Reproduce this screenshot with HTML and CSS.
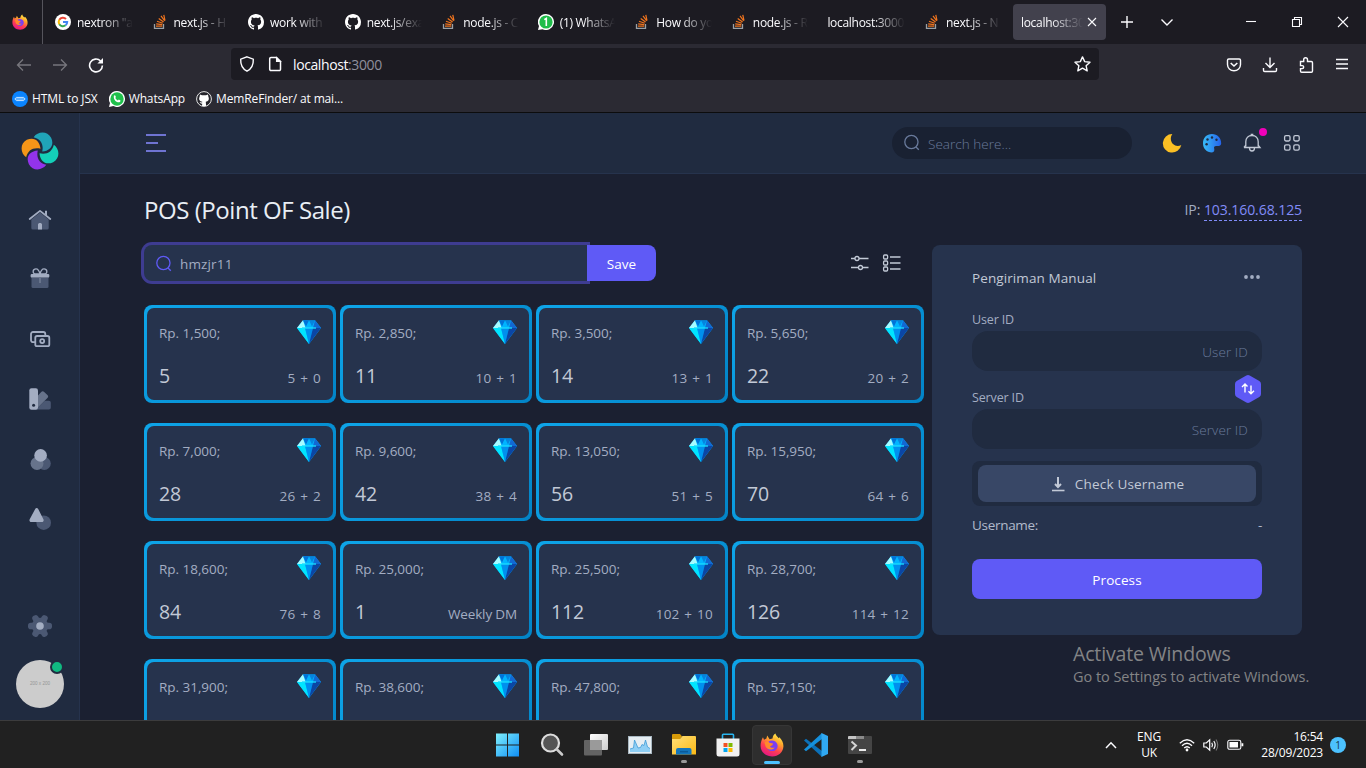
FILE: index.html
```html
<!DOCTYPE html>
<html lang="en">
<head>
<meta charset="utf-8">
<title>localhost:3000</title>
<link rel="stylesheet" href="styles.css">
</head>
<body>
<svg class="defs" width="0" height="0" aria-hidden="true">
  <defs>
    <linearGradient id="ffBody" x1="0.8" y1="0" x2="0.3" y2="1"><stop offset="0" stop-color="#fff44f"/><stop offset=".35" stop-color="#ffa32b"/><stop offset=".65" stop-color="#ff4050"/><stop offset="1" stop-color="#e31587"/></linearGradient>
    <linearGradient id="win" x1="0" y1="0" x2="1" y2="1"><stop offset="0" stop-color="#7ff0fd"/><stop offset="1" stop-color="#0f8ef5"/></linearGradient>
    <linearGradient id="folder" x1="0" y1="0" x2="1" y2="1"><stop offset="0" stop-color="#ffe07a"/><stop offset="1" stop-color="#fbb915"/></linearGradient>
    <linearGradient id="palette" x1="0" y1="0" x2="1" y2="0"><stop offset="0" stop-color="#38bdf8"/><stop offset="1" stop-color="#2563eb"/></linearGradient>
    <linearGradient id="glass" x1="0" y1="0" x2="1" y2="1"><stop offset="0" stop-color="#fff"/><stop offset="1" stop-color="#ccc"/></linearGradient>
  </defs>
  <symbol id="firefox" viewBox="0 0 24 24">
    <path fill="url(#ffBody)" d="M3 4.2 4 6.8 6.4 5.4 7.2 2.6 9.6 6.2 12.5 5.6C12.8 3 14 1.4 15.4.6c.4 2 2 3.200 3.300 4.700l.7-1c2.600 2.600 4.200 5.700 4 9.300C23 19.600 18.400 23.500 12.200 23.500S.7 19.300.6 13C.5 9.800 1.500 6.600 3 4.200Z"/>
    <path fill="#7b3ff2" d="M8.500 8.500c3-2.200 8-.9 9 3.200.8 3.600-2 6.600-5.600 6.400-3.200-.2-5.400-2.400-5.200-5.200l3.700.5 2.600-1.600-3.300-1.100Z"/>
    <path fill="#ff8a2c" d="M4.500 9.500c1.500-1.600 3.500-1.300 4.700.2l3.800.7c.2 1.500-2.700 1.600-3 3.300 1.200 1.500 3.100 1.200 4.700.7-1.800 3.100-7.500 2.700-9.100-1Z"/>
  </symbol>
  <symbol id="stack" viewBox="0 0 16 16">
    <path d="M2.500 10v4.300h9V10" fill="none" stroke="#9ba0a5" stroke-width="1.300"/>
    <path d="M4 12.200h6.300M4.200 9.800l6.100.8M5 7.200l5.800 2M6.700 4.400l4.900 3.700M9 1.900l3.700 4.900M11.800.8l1.200 5.900" fill="none" stroke="#f0741e" stroke-width="1.200"/>
  </symbol>
  <symbol id="github" viewBox="0 0 16 16"><path d="M8 0C3.580 0 0 3.580 0 8c0 3.540 2.290 6.530 5.470 7.590.4.070.55-.17.55-.38 0-.19-.01-.82-.01-1.490-2.010.37-2.530-.49-2.690-.94-.09-.23-.48-.94-.82-1.130-.28-.15-.68-.52-.01-.53.63-.01 1.080.58 1.230.82.72 1.210 1.870.87 2.330.66.07-.52.28-.87.51-1.070-1.780-.2-3.640-.89-3.640-3.950 0-.87.31-1.590.82-2.150-.08-.2-.36-1.020.08-2.120 0 0 .67-.21 2.200.82.64-.18 1.320-.27 2-.27s1.360.09 2 .27c1.530-1.040 2.200-.82 2.200-.82.44 1.100.16 1.920.08 2.120.51.56.82 1.270.82 2.150 0 3.070-1.870 3.750-3.650 3.950.29.25.54.73.54 1.480 0 1.070-.01 1.930-.01 2.200 0 .21.15.46.55.38A8.010 8.010 0 0 0 16 8c0-4.420-3.580-8-8-8Z"/></symbol>
  <symbol id="search" viewBox="0 0 20 20"><circle cx="9.400" cy="9" r="6.600"/><path d="m14 14 2.800 2.700"/></symbol>
  <symbol id="gem" viewBox="0 0 24 24">
    <path fill="#00b4ff" d="M6 .2h12L24 8 12 24 0 8Z"/>
    <path fill="#a6fbff" d="M6 .2 8.500 8H0Z"/><path fill="#0072d8" d="M6 .2 9 6.500 12 .2Z"/><path fill="#0864c8" d="M18 .2 15 6.500 12 .2Z" opacity=".6"/>
    <path fill="#1268d3" d="M18 .2 16 8h8Z"/>
    <path fill="#00e5ff" d="M0 8h8l4 16Z"/><path fill="#0090ee" d="M8 8h8l-4 16Z"/><path fill="#0b46a5" d="M16 8h8L12 24Z"/>
    <path fill="#16dcff" d="M5 7.200h14v1.600H5Z" opacity=".85"/>
  </symbol>
</svg>

<header class="browser">
  <div class="tabs">
    <div class="pinned"><svg width="16" height="16"><use href="#firefox"/></svg></div>
    <div class="tab"><svg width="16" height="16" viewBox="0 0 16 16"><circle cx="8" cy="8" r="8" fill="#fff"/><g fill="none" stroke-width="2"><path stroke="#ea4335" d="M4.300 5.800A4.300 4.300 0 0 1 11 5"/><path stroke="#fbbc05" d="M4.300 5.800a4.400 4.400 0 0 0 0 4.400"/><path stroke="#34a853" d="M4.300 10.200a4.300 4.300 0 0 0 6.300 1.100"/><path stroke="#4285f4" d="M8 8.100h4.200q0 2-1.600 3.200"/></g></svg><span>nextron "a</span></div>
    <div class="tab"><svg width="16" height="16"><use href="#stack"/></svg><span>next.js - H</span></div>
    <div class="tab"><svg class="white" width="16" height="16"><use href="#github"/></svg><span>work with</span></div>
    <div class="tab"><svg class="white" width="16" height="16"><use href="#github"/></svg><span>next.js/exa</span></div>
    <div class="tab"><svg width="16" height="16"><use href="#stack"/></svg><span>node.js - C</span></div>
    <div class="tab"><svg width="16" height="16" viewBox="0 0 16 16"><path d="M8 0a8 8 0 1 1-3.500 15.200L0 16l1-4A8 8 0 0 1 8 0Z" fill="#fff"/><circle cx="8" cy="8" r="6.600" fill="#1fbd4a"/><path d="M6.300 5.600 8.300 4.400V12" fill="none" stroke="#fff" stroke-width="1.600"/></svg><span>(1) WhatsA</span></div>
    <div class="tab"><svg width="16" height="16"><use href="#stack"/></svg><span>How do yo</span></div>
    <div class="tab"><svg width="16" height="16"><use href="#stack"/></svg><span>node.js - R</span></div>
    <div class="tab"><span>localhost:3000</span></div>
    <div class="tab"><svg width="16" height="16"><use href="#stack"/></svg><span>next.js - N</span></div>
    <div class="tab active"><span>localhost:30</span><svg class="line" width="10" height="10" viewBox="0 0 10 10"><path d="m1 1 8 8M9 1 1 9"/></svg></div>
    <div class="tab-tools">
      <svg class="line" width="14" height="14" viewBox="0 0 14 14"><path stroke-width="1.400" d="M7 1v12M1 7h12"/></svg>
      <svg class="line" width="14" height="14" viewBox="0 0 14 14"><path stroke-width="1.400" d="m1.500 4.500 5.500 5.500 5.500-5.500"/></svg>
    </div>
    <div class="win-tools">
      <svg class="line" width="12" height="12" viewBox="0 0 12 12"><path d="M1 5.500h10"/></svg>
      <svg class="line" width="12" height="12" viewBox="0 0 12 12"><path d="M1.500 3.500h7v7h-7zM3.500 3.500v-2h7v7h-2"/></svg>
      <svg class="line" width="12" height="12" viewBox="0 0 12 12"><path d="m1 1 10 10M11 1 1 11"/></svg>
    </div>
  </div>
  <div class="toolbar">
    <div class="nav-tools">
      <svg class="line dim" width="16" height="16" viewBox="0 0 16 16"><path stroke-width="1.300" d="M15 8H1.500M7 2.500 1.500 8 7 13.500"/></svg>
      <svg class="line dim" width="16" height="16" viewBox="0 0 16 16"><path stroke-width="1.300" d="M1 8h13.500M9 2.500 14.500 8 9 13.500"/></svg>
      <svg class="line" width="16" height="16" viewBox="0 0 16 16"><path stroke-width="1.600" d="M12.600 4A6.400 6.400 0 1 0 14.400 8.500"/><path fill="#fbfbfe" stroke="none" d="M15 1v5.600H9.400Z"/></svg>
    </div>
    <div class="url">
      <svg class="line" width="16" height="16" viewBox="0 0 16 16"><path stroke-width="1.400" d="M8 .8 14.300 3.200c.3 5.500-1.500 9.400-6.300 12C3.200 12.600 1.400 8.700 1.700 3.200Z"/></svg>
      <svg class="line" width="14" height="16" viewBox="0 0 14 16"><path stroke-width="1.500" d="M3 1.500h5.500l4 4v7.700a1.300 1.300 0 0 1-1.300 1.300H3a1.300 1.300 0 0 1-1.300-1.300V2.800A1.300 1.300 0 0 1 3 1.500Z"/><path fill="#fbfbfe" d="M8.500 1.500v4h4Z"/></svg>
      <p>localhost<i>:3000</i></p>
      <svg class="line" width="17" height="16" viewBox="0 0 17 16"><path stroke-width="1.400" stroke-linejoin="round" d="m8.500.9 2.200 4.700 5.300.6-3.900 3.500 1.100 5.100-4.700-2.600-4.700 2.600 1.100-5.100L1 6.200l5.300-.6Z"/></svg>
    </div>
    <div class="ext-tools">
      <svg class="line" width="16" height="16" viewBox="0 0 16 16"><path stroke-width="1.400" d="M2.800 2h10.400c.8 0 1.300.5 1.300 1.300V7.500c0 3.600-2.800 6.200-6.500 6.200S1.500 11.100 1.500 7.500V3.300C1.500 2.500 2 2 2.800 2Z"/><path stroke-width="1.600" d="M4.700 6 8 9l3.300-3"/></svg>
      <svg class="line" width="16" height="16" viewBox="0 0 16 16"><path stroke-width="1.400" d="M8 .5v10M3.500 6 8 10.500 12.500 6M1.500 11v2.300c0 .8.500 1.200 1.200 1.200h10.600c.7 0 1.200-.4 1.200-1.200V11"/></svg>
      <svg class="line" width="16" height="16" viewBox="0 0 16 16"><path stroke-width="1.400" d="M2.500 4.500h3.200V2.700a1.900 1.900 0 0 1 3.800 0v1.800h3.800c.7 0 1.200.5 1.200 1.200v8.300c0 .7-.5 1.200-1.200 1.200H3.700c-.7 0-1.200-.5-1.200-1.200V11.600h1.700a1.500 1.500 0 0 0 0-3H2.500Z"/></svg>
      <svg class="line" width="16" height="16" viewBox="0 0 16 16"><path stroke-width="1.300" d="M2 2.500h12M2 7h12M2 11.500h12"/></svg>
    </div>
  </div>
  <div class="bookmarks">
    <svg width="16" height="16" viewBox="0 0 16 16"><circle cx="8" cy="8" r="8" fill="#0a84ff"/><path d="M4.500 6.400h7L13.200 8l-1.700 1.600h-7L2.800 8Z" fill="#5fb0ff" stroke="#d5eaff" stroke-width=".9"/></svg><span>HTML to JSX</span>
    <svg width="16" height="16" viewBox="0 0 16 16"><path d="M8 0a8 8 0 1 1-3.700 15.100L0 16l1-4A8 8 0 0 1 8 0Z" fill="#fff"/><circle cx="8" cy="8" r="6.700" fill="#1fc04b"/><path d="M4.900 4.700c.5-.7 1.300-.7 1.500 0l.5 1.200-.6 1c.6 1.200 1.500 2 2.600 2.500l.9-.8 1.700.8c.2 1.500-1.500 2.200-2.600 1.900C6.500 10.800 4.300 8 4.900 4.700Z" fill="#fff"/></svg><span>WhatsApp</span>
    <svg width="16" height="16" viewBox="0 0 16 16"><circle cx="8" cy="8" r="7.400" fill="#25242b" stroke="#e6e6e6"/><path fill="#fff" d="M4 3.500 6 4.200h4l2-.7.400 2.300c1.200 2.800-.2 4.700-2.600 5l.3 4.200H6l.2-2.200C4.500 13 4 11.500 3.500 11l2.600.5.200-.8C3.700 10.400 2.400 8.500 3.600 5.800Z"/></svg><span class="long">MemReFinder/ at mai...</span>
  </div>
</header>

<div class="app">
  <aside class="sidebar">
    <svg class="logo" width="38" height="38" viewBox="0 0 111 111">
      <path fill="#20a4b8" d="M37 15C49-2 77-4 88 17 98 38 86 55 62 57 67 35 57 20 37 15Z"/>
      <path fill="#f59518" transform="rotate(-90 55.500 55.500)" d="M37 15C49-2 77-4 88 17 98 38 86 55 62 57 67 35 57 20 37 15Z"/>
      <path fill="#9333ea" transform="rotate(180 55.500 55.500)" d="M37 15C49-2 77-4 88 17 98 38 86 55 62 57 67 35 57 20 37 15Z"/>
      <path fill="#14cfb8" transform="rotate(90 55.500 55.500)" d="M37 15C49-2 77-4 88 17 98 38 86 55 62 57 67 35 57 20 37 15Z"/>
    </svg>
    <nav class="menu">
      <svg viewBox="0 0 24 24"><path class="lo" d="m12 4.500 8.700 7v8.600a1.500 1.500 0 0 1-1.500 1.500H4.800a1.500 1.500 0 0 1-1.500-1.500v-8.600Z"/><path class="hi" d="M10 21.500v-5c0-2 4-2 4 0v5ZM17 2.800h2v5l-2-1.500Z"/><path class="st" d="M1.700 11 12 2.900 22.300 11"/></svg>
      <svg viewBox="0 0 24 24"><path class="lo" d="M3.500 9.500h17V18.500a1.500 1.500 0 0 1-1.500 1.500H5A1.500 1.500 0 0 1 3.500 18.500Z"/><path class="hi" d="M3.500 6h17c1.200 0 1.200 3.600 0 3.600h-17c-1.200 0-1.200-3.600 0-3.600Z"/><path class="mid" d="M11 9.500h2V15h-2Z"/><path class="st thin" d="M12 6C11 2 9.800.9 8 .9 4.500.9 4.500 5 6.500 6H17.500c2-1 2-5.100-1.500-5.100C14.200.9 13 2 12 6Z"/></svg>
      <svg viewBox="0 0 24 24"><path class="st" d="M6.700 14.200H5A2 2 0 0 1 3 12.200V6a2 2 0 0 1 2-2h10.300a2 2 0 0 1 2 2v1.500"/><rect class="st" x="7.300" y="8" width="14" height="10.200" rx="1.800"/><circle class="st" cx="14.200" cy="13.100" r="2"/></svg>
      <svg viewBox="0 0 24 24"><path class="lo" d="m10 19.500 6.800-6.800h4c1.300 0 2 .7 2 2v4.700c0 1.300-.7 2-2 2H8Z"/><path class="mid" d="m10 7.500 3.200-3.400c1-1 2-1 3 0L19.400 7c1 1 1 2 0 3L9.500 20Z"/><rect class="hi" x="1.300" y=".3" width="8.700" height="21.400" rx="2.200"/><circle cx="5.600" cy="17.300" r="1.500" fill="#202b40"/></svg>
      <svg viewBox="0 0 24 24"><circle class="lo" cx="16.300" cy="15.500" r="6.500"/><circle class="mid" cx="9" cy="15.500" r="6.500"/><circle class="hi" cx="12.600" cy="7.400" r="6.300"/></svg>
      <svg viewBox="0 0 24 24"><circle class="lo" cx="15.700" cy="14.700" r="7.300"/><path class="hi" d="M7.200.9c.6-1.200 2.300-1.200 3 0l5.200 10.300c.7 1.400-.1 2.800-1.500 2.800H3.200c-1.400 0-2.200-1.400-1.500-2.800Z"/></svg>
    </nav>
    <div class="side-foot">
      <svg width="24" height="24" viewBox="0 0 24 24"><g class="lo"><circle cx="12" cy="12" r="8.200"/><rect x="0" y="8.800" width="24" height="6.400" rx="2.800"/><rect x="0" y="8.800" width="24" height="6.400" rx="2.800" transform="rotate(60 12 12)"/><rect x="0" y="8.800" width="24" height="6.400" rx="2.800" transform="rotate(120 12 12)"/></g><circle class="hi" cx="12" cy="12" r="3.800"/></svg>
      <div class="avatar">200 x 200<b></b></div>
    </div>
  </aside>

  <div class="main">
    <div class="topbar">
      <div class="burger"><b></b><b class="short"></b><b></b></div>
      <div class="find"><svg width="20" height="20"><use href="#search"/></svg><span>Search here...</span></div>
      <div class="actions">
        <svg width="20" height="20" viewBox="0 0 20 20"><path fill="#fbbf24" d="M10.300 1C8 4.500 8.500 8.500 11 11c2.300 2.200 5.200 2.600 8.300 1.100A9.300 9.300 0 1 1 10.300 1Z"/></svg>
        <svg width="20" height="20" viewBox="0 0 20 20"><path fill="url(#palette)" d="M10 1c5.400 0 9.300 4 9.200 9.500-.2 2.500-2.400 2.700-4.700 2.500-2.200-.1-2.800.8-2.300 2.500.5 2-.2 3.900-2.200 3.900C4.600 19.400 1 15.500 1 10.200S4.600 1 10 1Z"/><g fill="#202b40"><circle cx="10" cy="4.500" r="1.200"/><circle cx="5.500" cy="6.500" r="1.200"/><circle cx="14.500" cy="6.800" r="1.200"/><circle cx="4.600" cy="11.200" r="1.200"/></g></svg>
        <div class="bell"><svg class="ic" width="20" height="20" viewBox="0 0 20 20"><path d="M3.800 13.500V8.800c0-3.600 2.500-6.300 6.200-6.300s6.200 2.700 6.200 6.300v4.700M2 14.500h16l-2-2.500M4 12l-2 2.500M7.500 15c0 2 .8 3 2.500 3s2.500-1 2.500-3M9.300 2.300V1.400h1.400v.9"/></svg><b></b></div>
        <svg class="ic" width="20" height="20" viewBox="0 0 20 20"><g><rect x="2.600" y="2.600" width="5.400" height="5.400" rx="1.400"/><rect x="11.800" y="2.600" width="5.400" height="5.400" rx="1.400"/><rect x="2.600" y="11.800" width="5.400" height="5.400" rx="1.400"/><rect x="11.800" y="11.800" width="5.400" height="5.400" rx="1.400"/></g></svg>
      </div>
    </div>

    <div class="content">
      <div class="title-row"><h1>POS (Point OF Sale)</h1><p>IP: <a>103.160.68.125</a></p></div>
      <div class="columns">
        <section class="shop">
          <div class="filter">
            <div class="field"><svg width="20" height="20"><use href="#search"/></svg><span>hmzjr11</span></div>
            <button class="save">Save</button>
            <div class="views">
              <svg class="ic" width="20" height="20" viewBox="0 0 20 20"><path d="M1 5.500h4M9 5.500h9.500M1 14.500h7.500M12.500 14.500h6"/><circle cx="7" cy="5.500" r="2"/><circle cx="10.500" cy="14.500" r="2"/></svg>
              <svg class="ic" width="20" height="20" viewBox="0 0 20 20"><path d="M8 4h10.500M8 10h10.500M8 16h10.500"/><rect x="1.600" y="2" width="4" height="4" rx="1"/><rect x="1.600" y="8" width="4" height="4" rx="1"/><rect x="1.600" y="14" width="4" height="4" rx="1"/></svg>
            </div>
          </div>
          <div class="cards">
            <article class="card"><div><p>Rp. 1,500;</p><svg width="24" height="24"><use href="#gem"/></svg><strong>5</strong><em>5 + 0</em></div></article>
            <article class="card"><div><p>Rp. 2,850;</p><svg width="24" height="24"><use href="#gem"/></svg><strong>11</strong><em>10 + 1</em></div></article>
            <article class="card"><div><p>Rp. 3,500;</p><svg width="24" height="24"><use href="#gem"/></svg><strong>14</strong><em>13 + 1</em></div></article>
            <article class="card"><div><p>Rp. 5,650;</p><svg width="24" height="24"><use href="#gem"/></svg><strong>22</strong><em>20 + 2</em></div></article>
            <article class="card"><div><p>Rp. 7,000;</p><svg width="24" height="24"><use href="#gem"/></svg><strong>28</strong><em>26 + 2</em></div></article>
            <article class="card"><div><p>Rp. 9,600;</p><svg width="24" height="24"><use href="#gem"/></svg><strong>42</strong><em>38 + 4</em></div></article>
            <article class="card"><div><p>Rp. 13,050;</p><svg width="24" height="24"><use href="#gem"/></svg><strong>56</strong><em>51 + 5</em></div></article>
            <article class="card"><div><p>Rp. 15,950;</p><svg width="24" height="24"><use href="#gem"/></svg><strong>70</strong><em>64 + 6</em></div></article>
            <article class="card"><div><p>Rp. 18,600;</p><svg width="24" height="24"><use href="#gem"/></svg><strong>84</strong><em>76 + 8</em></div></article>
            <article class="card"><div><p>Rp. 25,000;</p><svg width="24" height="24"><use href="#gem"/></svg><strong>1</strong><em class="word">Weekly DM</em></div></article>
            <article class="card"><div><p>Rp. 25,500;</p><svg width="24" height="24"><use href="#gem"/></svg><strong>112</strong><em>102 + 10</em></div></article>
            <article class="card"><div><p>Rp. 28,700;</p><svg width="24" height="24"><use href="#gem"/></svg><strong>126</strong><em>114 + 12</em></div></article>
            <article class="card"><div><p>Rp. 31,900;</p><svg width="24" height="24"><use href="#gem"/></svg></div></article>
            <article class="card"><div><p>Rp. 38,600;</p><svg width="24" height="24"><use href="#gem"/></svg></div></article>
            <article class="card"><div><p>Rp. 47,800;</p><svg width="24" height="24"><use href="#gem"/></svg></div></article>
            <article class="card"><div><p>Rp. 57,150;</p><svg width="24" height="24"><use href="#gem"/></svg></div></article>
          </div>
        </section>

        <section class="panel">
          <div class="panel-head"><h2>Pengiriman Manual</h2><svg width="16" height="4" viewBox="0 0 16 4" fill="#a3adc2"><circle cx="2" cy="2" r="1.900"/><circle cx="8" cy="2" r="1.900"/><circle cx="14" cy="2" r="1.900"/></svg></div>
          <label class="user">User ID</label>
          <div class="box">User ID</div>
          <div class="between"><label class="server">Server ID</label>
            <svg width="28" height="28" viewBox="0 0 28 28"><path fill="#5f5af6" d="M12.300.5q1.700-.9 3.400 0l9.600 5.500Q27 7 27 9v10q0 2-1.700 3l-9.600 5.500q-1.700.9-3.400 0L2.700 22Q1 21 1 19V9q0-2 1.700-3Z"/><path fill="none" stroke="#fff" stroke-width="1.400" d="M11 17.500V9.500M8 12l3-3 2.500 2.500M17 10.500v8M14.500 16.200l2.500 2.500 3-3"/></svg></div>
          <div class="box">Server ID</div>
          <div class="check"><button><svg width="16" height="16" viewBox="0 0 16 16"><path fill="none" stroke="#c2c9d6" stroke-width="2" d="M8 1v9.500M5 8l3 3 3-3"/><path stroke="#c2c9d6" stroke-width="1.600" d="M2 14.500h12.500"/></svg>Check Username</button></div>
          <div class="result"><span>Username:</span><span>-</span></div>
          <button class="process">Process</button>
        </section>
      </div>
    </div>
  </div>
</div>

<div class="watermark"><p>Activate Windows</p><small>Go to Settings to activate Windows.</small></div>

<footer class="taskbar">
  <div class="apps">
    <div><svg width="24" height="24" viewBox="0 0 24 24"><path fill="url(#win)" d="M0 .5h11v11H0zM12 .5h11v11H12zM0 12.500h11v11H0zM12 12.500h11v11H12z"/></svg></div>
    <div><svg width="24" height="24" viewBox="0 0 24 24"><circle cx="10.500" cy="10" r="8.500" fill="#555" stroke="#ddd" stroke-width="2.200"/><path d="m17 16.500 5 5" stroke="#ccc" stroke-width="2.600" stroke-linecap="round"/></svg></div>
    <div><svg width="24" height="24" viewBox="0 0 24 24"><rect x="6" y="1" width="18" height="16" rx="1" fill="url(#glass)"/><rect x="0" y="7" width="18" height="15.500" rx="1" fill="#6a6a6a" opacity=".9"/><path d="M6 7h12v10H6z" fill="#9a9a9a"/></svg></div>
    <div><svg width="24" height="20" viewBox="0 0 24 20"><rect x=".5" y="1.500" width="23" height="17" fill="#e6eef3" stroke="#a9b8c2"/><path fill="#8fcff5" d="M2 17v-3l3.500-1L6.500 5l3.500 8 2.500-.5 1.500-3 2 1L17.500 5l2 7 2.500 1.500V17Z"/><path fill="none" stroke="#3f9bd6" stroke-width=".8" d="M2 14l3.500-1L6.500 5l3.500 8 2.500-.5 1.500-3 2 1L17.500 5l2 7 2.500 1.500"/></svg></div>
    <div class="run"><svg width="24" height="24" viewBox="0 0 24 24"><path fill="#d79a08" d="M0 2a1 1 0 0 1 1-1h7l2 2.500-2 3H0Z"/><path fill="url(#folder)" d="M0 6h8l2.500-3H23a1 1 0 0 1 1 1v17.500H0Z"/><path fill="#1376bd" d="M4 21.500V17q0-2 2-2h11.500q2 0 2 2v4.500Z"/><path stroke="#0a5a99" stroke-width="1.500" d="M8 18.700h8"/></svg></div>
    <div><svg width="24" height="24" viewBox="0 0 24 24"><path fill="none" stroke="#29b5f0" stroke-width="1.600" d="M6.500 7V2q0-.8.800-.8h9.400q.8 0 .8.800v5"/><path fill="#f1f1f1" d="M.5 5.500h23V21q0 2.500-2.500 2.500H3Q.5 23.500.5 21Z"/><path fill="#f25022" d="M7.500 10h4v4h-4z"/><path fill="#7fba00" d="M12.500 10h4v4h-4z"/><path fill="#00a4ef" d="M7.500 15h4v4h-4z"/><path fill="#ffb900" d="M12.500 15h4v4h-4z"/></svg></div>
    <div class="run current"><svg width="24" height="24"><use href="#firefox"/></svg></div>
    <div><svg width="24" height="24" viewBox="0 0 24 24"><path fill="#0b70b8" d="m0 7.500 2-1.700L18 18v6Z"/><path fill="#1590dc" d="m0 16.500 2 1.700L18 6V0Z"/><path fill="#30a9f2" d="m17.500 0 6.500 3v18l-6.500 3Z"/></svg></div>
    <div class="run"><svg width="24" height="24" viewBox="0 0 24 24"><rect x="0" y="3" width="24" height="18" rx="1" fill="#454545"/><path fill="#c5c5c5" d="M0 6V4q0-1 1-1h15v3Z"/><path fill="#8a8a8a" d="M8 3h8v3H8z"/><path d="m3.500 8.500 4.500 4-4.500 4.500" fill="none" stroke="#d5d5d5" stroke-width="2"/><path d="M11 17h7" stroke="#fff" stroke-width="1.800"/></svg></div>
  </div>
  <div class="tray">
    <svg class="line" width="12" height="8" viewBox="0 0 12 8"><path stroke-width="1.500" d="m1 7 5-5.200L11 7"/></svg>
    <p class="lang">ENG<br>UK</p>
    <svg class="line" width="16" height="14" viewBox="0 0 16 14"><path stroke-width="1.300" d="M.8 5.200q7.200-7 14.400 0M3 7.700q5-4.800 10 0M5.200 10.100q2.800-2.600 5.600 0"/><circle cx="8" cy="12" r="1.400" fill="#fff" stroke="none"/></svg>
    <svg class="line" width="16" height="14" viewBox="0 0 16 14"><path stroke-width="1.200" d="M.8 5h2.500l3.400-3.200v10.400L3.300 9H.8ZM8.800 4.800q1.400 2.200 0 4.400M10.800 3q2.700 4 0 8"/><path stroke="#777" d="M13 1.500q3.500 5.500 0 11"/></svg>
    <svg class="line" width="17" height="12" viewBox="0 0 17 12"><rect x=".8" y="1.300" width="13" height="9" rx="1.800"/><path fill="#fff" stroke="none" d="M2.500 3h8.500v5.600H2.500zM14.500 4.300h1.800v3h-1.800z"/></svg>
    <p class="clock">16:54<br>28/09/2023</p>
    <b class="count">1</b>
  </div>
</footer>
</body>
</html>
```
FILE: styles.css
```css
* { box-sizing: border-box; margin: 0; padding: 0; }
body {
  width: 1366px; height: 768px; overflow: hidden; position: relative;
  display: flex; flex-direction: column;
  font-family: "Open Sans", "Noto Sans", sans-serif; font-size: 13.5px;
  background: #1b2031; color: #a3adc2;
}
svg { display: block; flex: none; }
.defs { position: absolute; }
button { border: 0; font: inherit; color: inherit; background: none; }
p, span, label, em, strong { white-space: nowrap; }

.line { fill: none; stroke: #fbfbfe; stroke-width: 1.1; }
.line.dim { stroke: #77767d; }
.white { fill: #fff; }

/* Browser chrome */
.browser { flex: none; height: 113px; background: #2b2a33; border-bottom: 1px solid #0c0c0d; color: #fbfbfe; }
.tabs { height: 44px; background: #1c1b22; display: flex; align-items: center; font-size: 12px; }
.pinned { width: 43px; height: 44px; padding: 14px 0 0 12px; border-right: 1px solid #55545c; margin-right: 4px; }
.tab { width: 96.55px; padding: 0 9px 0 8px; height: 44px; display: flex; align-items: center; gap: 6px; flex: none; }
.tab span { flex: 1; line-height: 20px; padding-top: 1px; letter-spacing: -.3px; -webkit-mask-image: linear-gradient(90deg, #000 calc(100% - 34px), transparent calc(100% - 2px)); mask-image: linear-gradient(90deg, #000 calc(100% - 34px), transparent calc(100% - 2px)); }
.tab.active { width: 93px; height: 36px; background: #42414d; border-radius: 4px; gap: 2px; padding-right: 11px; margin-left: .5px; }
.tab-tools { display: flex; gap: 26px; margin-left: 14px; }
.win-tools { display: flex; gap: 34px; margin-left: auto; padding-right: 17px; }
.toolbar { height: 42px; display: flex; align-items: center; }
.nav-tools { display: flex; gap: 20px; padding-left: 16px; width: 231px; }
.url { width: 868px; height: 32px; margin-top: -2px; background: #1c1b22; border-radius: 4px; display: flex; align-items: center; padding: 0 8px; }
.url svg + svg { margin-left: 13px; }
.url p { margin-left: 11px; font-size: 14px; letter-spacing: -.4px; flex: 1; padding-top: 1px; }
.url i { font-style: normal; color: #8f8f9d; }
.ext-tools { display: flex; gap: 20px; margin-left: auto; padding-right: 16px; }
.bookmarks { height: 25px; display: flex; align-items: center; padding-left: 12px; font-size: 12px; }
.bookmarks span { margin: 0 11px 0 4px; letter-spacing: -.12px; }
.bookmarks .long { letter-spacing: -.15px; }

/* Application shell */
.app { height: 607px; display: flex; overflow: hidden; }
.sidebar { width: 80px; background: #202b40; border-right: 1px solid #26334d; display: flex; flex-direction: column; align-items: center; padding: 19px 0 12px 1px; }
.logo { margin-right: 1px; }
.menu { display: flex; flex-direction: column; gap: 36px; margin-top: 38px; }
.menu svg { width: 24px; height: 24px; }
.lo { fill: #4b5873; }
.mid { fill: #67738b; }
.hi { fill: #a3adc2; }
.st { fill: none; stroke: #a3adc2; stroke-width: 1.8; stroke-linejoin: round; stroke-linecap: round; }
.thin { stroke-width: 1.4; }
.side-foot { margin-top: auto; display: flex; flex-direction: column; align-items: center; gap: 22px; }
.avatar { position: relative; width: 48px; height: 48px; border-radius: 50%; background: #ccc; color: #969696; font: 4.6px/48px "Liberation Sans", sans-serif; text-align: center; }
.avatar b { position: absolute; right: 0; top: 0; width: 14px; height: 14px; border-radius: 50%; border: 2px solid #202b40; background: #10b981; }

.main { flex: 1; display: flex; flex-direction: column; }
.topbar { flex: none; height: 61px; background: #202b40; border-bottom: 1px solid #26334d; display: flex; align-items: center; padding: 0 64px 0 66px; }
.burger { width: 20px; display: grid; gap: 6px; }
.burger b { height: 2px; background: #6f74d2; }
.burger .short { width: 12px; }
.find { margin-left: auto; width: 240px; height: 32px; border-radius: 16px; background: #192132; display: flex; align-items: center; gap: 6px; padding-left: 10px; color: #697a9b; font-weight: 300; letter-spacing: .03px; }
.find svg, .field svg { fill: none; stroke: #697a9b; stroke-width: 1.3; }
.find span { padding-top: 2px; }
.actions { display: flex; gap: 20px; margin-left: 30px; }
.ic { fill: none; stroke: #c2c9d6; stroke-width: 1.3; }
.bell { position: relative; }
.bell b { position: absolute; left: 17px; top: -5px; width: 8px; height: 8px; border-radius: 50%; background: #f000b9; }

.content { padding: 0 64px; }
.title-row { height: 71px; display: flex; justify-content: space-between; align-items: center; }
h1 { font-size: 24px; font-weight: 400; color: #e9eef5; letter-spacing: -.45px; }
.title-row p { font-size: 14px; letter-spacing: -.07px; }
.title-row a { color: #818cf8; border-bottom: 1px dashed #818cf8; padding-bottom: 1px; }
.columns { display: flex; gap: 8px; align-items: flex-start; }
.shop { width: 780px; }
.filter { display: flex; height: 36px; margin-bottom: 24px; }
.field { width: 443px; height: 36px; background: #26334d; border-radius: 8px 0 0 8px; box-shadow: 0 0 0 3px #3e3c91; display: flex; align-items: center; gap: 6px; padding-left: 10px; letter-spacing: .15px; }
.field svg { stroke: #5f5af6; margin-top: 1px; }
.field span { padding-top: 2px; }
.save { position: relative; width: 69px; background: #5f5af6; border-radius: 0 8px 8px 0; color: #fff; letter-spacing: .1px; padding-top: 1px; }
.views { margin: 8px 0 0 auto; display: flex; gap: 12px; padding-right: 22px; }
.cards { display: grid; grid-template-columns: repeat(4, 192px); gap: 20px 4px; grid-auto-rows: 98px; }
.card { padding: 3px; border-radius: 8px; background: linear-gradient(135deg, #0ea5e9, #0284c7); }
.card div { height: 92px; border-radius: 7px; background: #26334d; padding: 12px 12px 0; display: grid; grid-template-columns: 1fr auto; align-content: start; }
.card p { line-height: 24px; padding-top: 1px; letter-spacing: -.03px; }
.card svg { justify-self: end; }
.card strong { font-size: 19.5px; font-weight: 400; color: #c2c9d6; line-height: 28px; margin-top: 17px; letter-spacing: -.2px; }
.card em { font-style: normal; line-height: 20px; margin-top: 23px; letter-spacing: .25px; word-spacing: 1px; }
.card .word { letter-spacing: -.15px; word-spacing: 0; }

.panel { width: 370px; height: 390px; border-radius: 8px; background: #26334d; padding: 20px 40px 0; display: flex; flex-direction: column; }
.panel-head { display: flex; justify-content: space-between; align-items: center; height: 24px; padding-right: 2px; }
h2 { font-size: 13.5px; font-weight: 400; letter-spacing: .1px; color: #c2c9d6; padding-top: 1px; }
.panel label { font-size: 12.5px; line-height: 16px; letter-spacing: -.15px; }
.user { margin: 23px 0 3px; }
.box { height: 40px; border-radius: 16px; background: #202b40; text-align: right; line-height: 42px; padding-right: 14px; color: #697a9b; font-weight: 300; letter-spacing: .1px; }
.between { height: 38px; display: flex; justify-content: space-between; padding-top: 4px; }
.between label { padding-top: 15px; }
.check { margin-top: 12px; height: 45px; border-radius: 8px; background: #202b40; padding: 4px 6px; }
.check button { width: 100%; height: 37px; border-radius: 8px; background: #384766; color: #c2c9d6; display: flex; align-items: center; justify-content: center; gap: 9px; letter-spacing: .2px; }
.result { display: flex; justify-content: space-between; line-height: 20px; margin-top: 9px; color: #b1bacb; letter-spacing: -.3px; }
.process { margin-top: 24px; height: 40px; border-radius: 8px; background: #5f5af6; color: #fff; letter-spacing: .1px; padding-top: 2px; }

.watermark { position: absolute; left: 1073px; top: 641px; color: #838486; }
.watermark p { font-size: 19.5px; line-height: 26px; letter-spacing: -.15px; }
.watermark small { display: block; font-size: 14.5px; line-height: 19px; white-space: nowrap; letter-spacing: -.04px; }

/* Desktop taskbar */
.taskbar { flex: none; height: 48px; background: #212121; border-top: 1px solid #3c3c3d; display: flex; justify-content: space-between; color: #fff; font-size: 12px; padding-left: 488px; }
.apps { display: flex; gap: 4px; align-items: center; }
.apps div { position: relative; width: 40px; height: 40px; display: grid; place-items: center; border-radius: 4px; }
.apps .run::after { content: ""; position: absolute; bottom: 2px; left: 17px; width: 6px; height: 3px; border-radius: 2px; background: #9a9a9a; }
.apps .current { background: #2e2e2e; border: 1px solid #363636; }
.apps .current::after { left: 11px; bottom: 0; width: 16px; background: #4cc2ff; }
.tray { display: flex; align-items: center; padding-right: 20px; letter-spacing: -.2px; }
.lang { width: 36px; margin: 0 12px 0 14px; text-align: center; line-height: 16px; }
.tray svg + svg { margin-left: 8px; }
.clock { width: 63px; margin-left: 16px; text-align: right; line-height: 16px; }
.count { margin-left: 7px; width: 16px; height: 16px; border-radius: 50%; background: #4cc2ff; color: #15394b; font-size: 10px; font-weight: 400; text-align: center; line-height: 16px; }
```
